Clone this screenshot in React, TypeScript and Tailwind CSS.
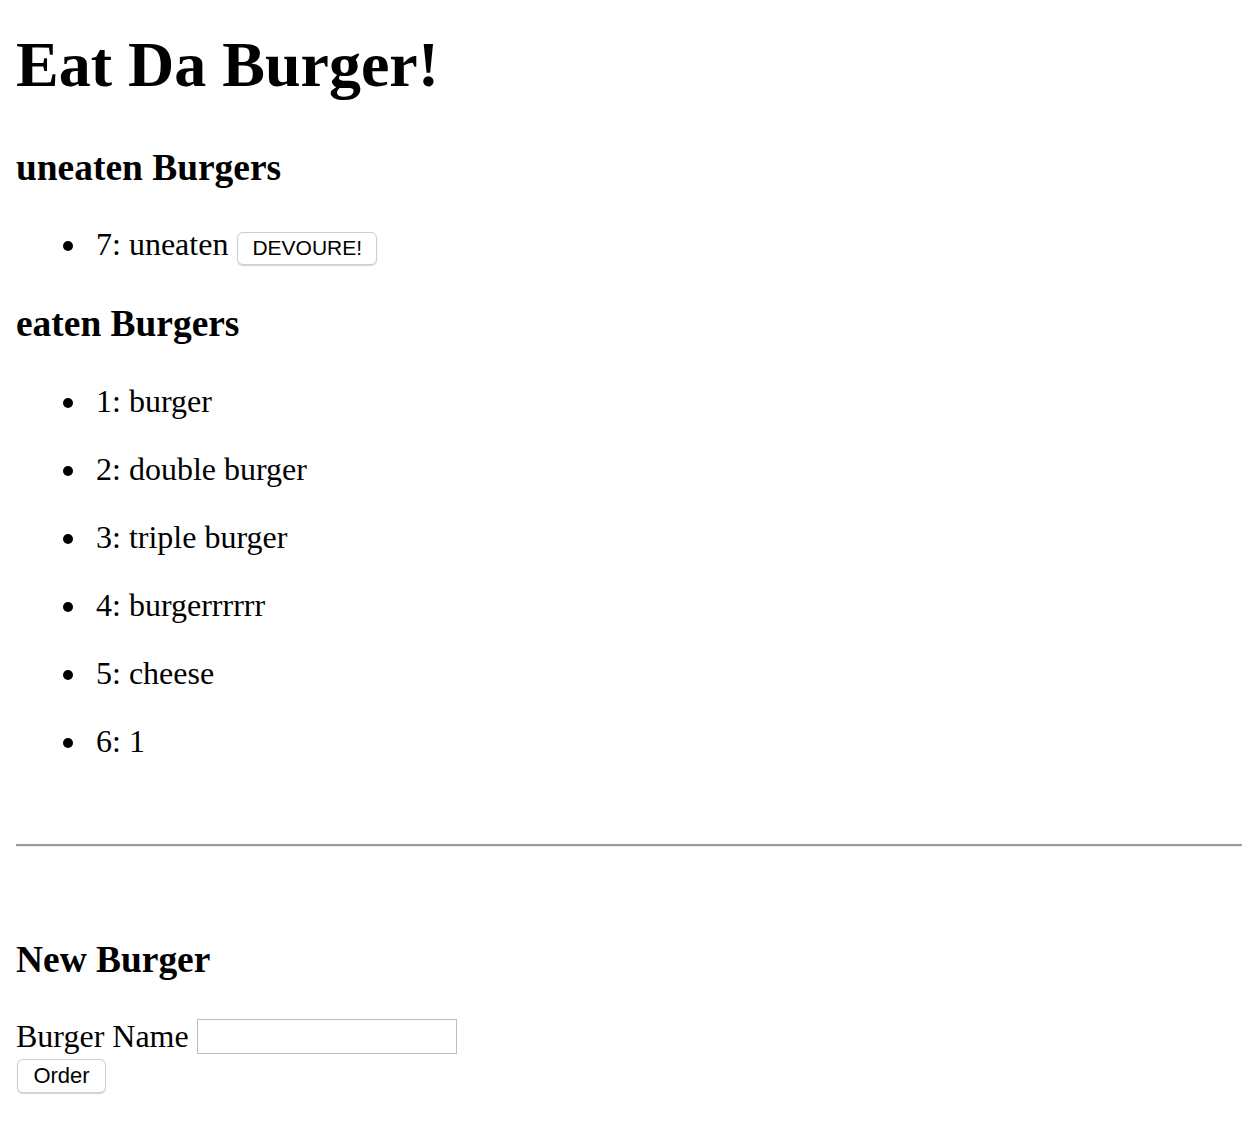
import React from 'react';

const eaten = ['burger', 'double burger', 'triple burger', 'burgerrrrrr', 'cheese', '1'];

const btn =
  "font-['Liberation_Sans',Arial,sans-serif] bg-white text-black border border-[#cfcfcf] rounded-[6px] shadow-[0_1px_1px_rgba(0,0,0,0.18)] leading-[22px]";

const Dot = () => (
  <span className="inline-block w-[10px] h-[10px] rounded-full bg-black align-[4px] mr-[23px]" />
);

export default function App() {
  return (
    <div className="bg-white min-h-[1128px] pl-4 pt-px font-['Liberation_Serif','Times_New_Roman',serif] text-black text-[32px] leading-[36px]">
      <h1 className="mt-[27px] text-[64px] leading-[74px] font-bold">Eat Da Burger!</h1>

      <h3 className="mt-[44px] text-[37.44px] leading-[43px] font-bold">uneaten Burgers</h3>
      <ul className="mt-[37px] pl-[47px]">
        <li>
          <Dot />
          7: uneaten{' '}
          <button className={`${btn} ml-px text-[21px] px-[14px] pt-[4px] pb-[5px]`}>DEVOURE!</button>
        </li>
      </ul>

      <h3 className="mt-[37px] text-[37.44px] leading-[43px] font-bold">eaten Burgers</h3>
      <ul className="pt-[6px] pl-[47px]">
        {eaten.map((name, i) => (
          <li key={i} className="mt-[32px]">
            <Dot />
            {i + 1}: {name}
          </li>
        ))}
      </ul>

      <hr className="mt-[85px] h-0 border-0 border-t-2 border-t-[#9b9b9b] border-b border-b-[#eeeeee]" />

      <h3 className="mt-[91px] text-[37.44px] leading-[43px] font-bold">New Burger</h3>
      <div className="mt-[37px] flex items-center">
        <span>Burger Name</span>
        <input
          type="text"
          className="ml-[8px] w-[260px] h-[35px] border border-[#bdbdbd] bg-white outline-none"
        />
      </div>
      <button className={`${btn} mt-[5px] ml-px text-[22px] w-[89px] h-[34px]`}>Order</button>
    </div>
  );
}
